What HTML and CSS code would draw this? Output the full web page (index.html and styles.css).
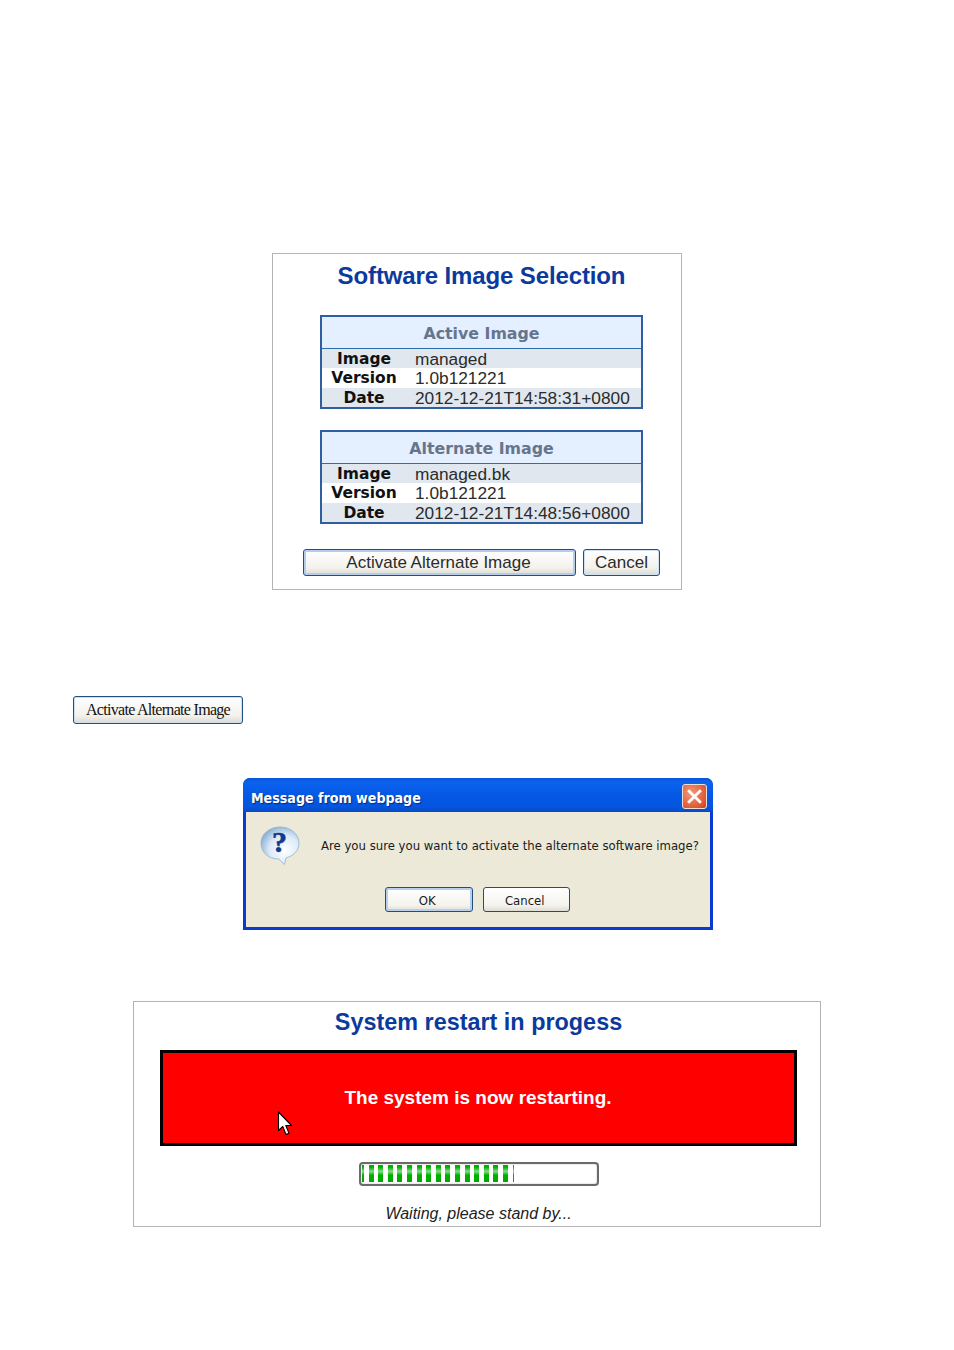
FILE: index.html
```html
<!DOCTYPE html>
<html lang="en">
<head>
<meta charset="utf-8">
<title>Software Image Selection</title>
<link rel="stylesheet" href="styles.css">
</head>
<body>
<main class="page">
  <section class="panel select-panel">
    <div class="select-inner">
      <h1 class="title">Software Image Selection</h1>
      <table class="info">
        <colgroup><col class="col-label"><col></colgroup>
        <thead><tr><th colspan="2">Active Image</th></tr></thead>
        <tbody>
          <tr class="shade"><th>Image</th><td>managed</td></tr>
          <tr><th>Version</th><td>1.0b121221</td></tr>
          <tr class="shade"><th>Date</th><td>2012-12-21T14:58:31+0800</td></tr>
        </tbody>
      </table>
      <table class="info">
        <colgroup><col class="col-label"><col></colgroup>
        <thead><tr><th colspan="2">Alternate Image</th></tr></thead>
        <tbody>
          <tr class="shade"><th>Image</th><td>managed.bk</td></tr>
          <tr><th>Version</th><td>1.0b121221</td></tr>
          <tr class="shade"><th>Date</th><td>2012-12-21T14:48:56+0800</td></tr>
        </tbody>
      </table>
    </div>
    <div class="actions">
      <button class="btn btn-activate" type="button">Activate Alternate Image</button>
      <button class="btn btn-cancel" type="button">Cancel</button>
    </div>
  </section>

  <button class="btn btn-serif" type="button">Activate Alternate Image</button>

  <section class="dialog">
    <header class="dialog-bar">
      <span class="dialog-title">Message from webpage</span>
      <span class="dialog-close">
        <svg viewBox="0 0 14 14" width="15" height="15"><path d="M2 2 L12 12 M12 2 L2 12" stroke="#fff" stroke-width="2.600" stroke-linecap="square"/></svg>
      </span>
    </header>
    <div class="dialog-body">
      <div class="dialog-message">
        <svg class="q-icon" viewBox="0 0 40 40" width="40" height="40">
          <defs>
            <radialGradient id="bub" cx="0.62" cy="0.62" r="0.72">
              <stop offset="0" stop-color="#ffffff"/>
              <stop offset="0.55" stop-color="#dceaf7"/>
              <stop offset="1" stop-color="#7fa8cf"/>
            </radialGradient>
          </defs>
          <path d="M20 1 C30.500 1 39 8 39 17 C39 25 33 30 26 32 L24.500 38.500 L18.500 33 C8 33 1 26 1 17 C1 8 9.500 1 20 1 Z" fill="url(#bub)" stroke="#8fb0cf" stroke-width="0.800"/>
          <text x="19.500" y="26" text-anchor="middle" class="q-mark">?</text>
        </svg>
        <p class="dialog-text">Are you sure you want to activate the alternate software image?</p>
      </div>
      <div class="dialog-actions">
        <button class="xp-btn xp-default" type="button">OK</button>
        <button class="xp-btn" type="button">Cancel</button>
      </div>
    </div>
  </section>

  <section class="panel restart-panel">
    <h2 class="title title-restart">System restart in progess</h2>
    <div class="alert">
      The system is now restarting.
      <svg class="cursor" viewBox="0 0 16 26" width="16" height="26"><path d="M1.500 1 L1.500 19.500 L5.800 15.500 L9 23.500 L12 22.300 L8.800 14.500 L14.500 14.500 Z" fill="#fff" stroke="#000" stroke-width="1.100" stroke-linejoin="round"/></svg>
    </div>
    <div class="progress">
      <i class="seg seg-start"></i>
      <i class="seg"></i><i class="seg"></i><i class="seg"></i><i class="seg"></i><i class="seg"></i>
      <i class="seg"></i><i class="seg"></i><i class="seg"></i><i class="seg"></i><i class="seg"></i>
      <i class="seg"></i><i class="seg"></i><i class="seg"></i><i class="seg"></i><i class="seg"></i>
      <i class="seg seg-end"></i>
    </div>
    <p class="waiting">Waiting, please stand by...</p>
  </section>
</main>
</body>
</html>
```

FILE: styles.css
```css
html, body { margin: 0; padding: 0; background: #fff; }
.page {
  width: 954px;
  height: 1350px;
  padding-top: 253px;
  box-sizing: border-box;
  display: flex;
  flex-direction: column;
  align-items: center;
  font-family: "Liberation Sans", Arial, sans-serif;
  overflow: hidden;
}
.panel { border: 1px solid #b4b4b4; box-sizing: border-box; background: #fff; }
.title {
  margin: 0;
  font-size: 24px;
  font-weight: bold;
  letter-spacing: -0.125px;
  color: #0b3a9c;
  text-align: center;
}

/* selection panel */
.select-panel { width: 410px; height: 337px; }
.select-inner { margin-left: 47px; width: 323px; display: flex; flex-direction: column; gap: 21px; }
.select-panel .title { height: 44px; line-height: 44px; margin-bottom: -4px; }
.info {
  width: 323px;
  height: 94px;
  box-sizing: border-box;
  border-collapse: separate;
  border-spacing: 0;
  border: 2px solid #2f5f9f;
  table-layout: fixed;
}
.col-label { width: 84px; }
.info thead th {
  height: 30px;
  padding: 1px 0 0;
  background: #e4efff;
  border-bottom: 1px solid #2f6fa8;
  font: bold 15.800px "DejaVu Sans", Verdana, sans-serif;
  color: #66758c;
}
.info tbody tr { height: 19.300px; }
.info tbody th {
  padding: 2px 0 0;
  font: bold 15.500px/17px "DejaVu Sans", Verdana, sans-serif;
  color: #111;
  text-align: center;
}
.info td {
  padding: 1px 0 0 9px;
  font-size: 17.300px;
  line-height: 18px;
  color: #2b2b2b;
  white-space: nowrap;
}
.info .shade { background: #e1e7ee; }
.actions { margin: 25px 0 0 30px; display: flex; gap: 7px; }
.btn {
  height: 27px;
  padding: 0;
  box-sizing: border-box;
  border: 1px solid #1f4f85;
  border-radius: 3px;
  background: linear-gradient(#ffffff, #f3f2ec 70%, #dcdad0);
  font-family: "Liberation Sans", Arial, sans-serif;
  font-size: 17px;
  color: #2b2b2b;
  box-shadow: inset 0 0 0 1px #cfdff2;
}
.btn-activate { width: 273px; padding-right: 2px; box-shadow: inset 0 0 0 2px #b5cdec; }
.btn-cancel { width: 77px; }

/* lone button */
.btn-serif {
  align-self: flex-start;
  margin: 106px 0 0 73px;
  width: 170px;
  height: 28px;
  font-family: "Liberation Serif", "Times New Roman", serif;
  font-size: 16px;
  letter-spacing: -0.700px;
  color: #111;
}

/* dialog */
.dialog {
  margin: 54px 0 0 2px;
  width: 470px;
  height: 152px;
  box-sizing: border-box;
  display: flex;
  flex-direction: column;
  background: #0a3bd0;
  border-radius: 7px 7px 0 0;
  padding: 0 3px 3px;
}
.dialog-bar {
  height: 34px;
  flex: none;
  margin: 0 -3px;
  padding: 0 6px 0 8px;
  box-sizing: border-box;
  display: flex;
  align-items: center;
  justify-content: space-between;
  border-radius: 7px 7px 0 0;
  background: linear-gradient(#0a55d8, #0a62ee 12%, #0558e4 50%, #0456e0 85%, #0a48c0);
}
.dialog-title {
  margin-top: 6px;
  font: bold 14.100px "DejaVu Sans", Tahoma, sans-serif;
  font-stretch: condensed;
  color: #fff;
  text-shadow: 1px 1px 1px #0a2a80;
}
.dialog-close {
  width: 25px;
  height: 25px;
  margin-top: 2px;
  box-sizing: border-box;
  display: flex;
  align-items: center;
  justify-content: center;
  border: 1px solid #f2ddd6;
  border-radius: 3px;
  background: radial-gradient(circle at 35% 35%, #ef9a7c, #df5a33 70%, #c8401c);
}
.dialog-body {
  flex: 1;
  background: #ece9d9;
  display: flex;
  flex-direction: column;
}
.dialog-message { display: flex; align-items: center; height: 72px; padding-left: 14px; }
.q-icon { flex: none; margin-top: -5px; overflow: visible; }
.q-mark { font: bold 30px "Liberation Serif", serif; fill: #123a8c; stroke: #123a8c; stroke-width: 0.600px; }
.dialog-text {
  margin: -6px 0 0 21px;
  font: 13px "DejaVu Sans", Tahoma, sans-serif;
  font-stretch: condensed;
  color: #1a1a1a;
  white-space: nowrap;
}
.dialog-actions { display: flex; gap: 10px; margin: 3px 0 0 139px; }
.xp-btn {
  width: 87.500px;
  height: 25px;
  padding: 1px 3px 0 0;
  box-sizing: border-box;
  border: 1px solid #1f4f7e;
  border-radius: 3px;
  background: linear-gradient(#fff, #f4f3ee 75%, #dedcd2);
  font: 13px "DejaVu Sans", Tahoma, sans-serif;
  font-stretch: condensed;
  color: #1a1a1a;
}
.xp-default { box-shadow: inset 0 0 0 2px #b9cfee; }

/* restart panel */
.restart-panel {
  margin-top: 71px;
  width: 688px;
  height: 226px;
  display: flex;
  flex-direction: column;
  align-items: center;
}
.title-restart { height: 40px; line-height: 40px; font-size: 23.400px; letter-spacing: 0; margin-left: 3px; }
.alert {
  position: relative;
  margin: 8px 0 0 2px;
  width: 637px;
  height: 96px;
  box-sizing: border-box;
  border: 3px solid #000;
  background: #f00;
  color: #fff;
  font-size: 19px;
  font-weight: bold;
  line-height: 90px;
  text-align: center;
}
.cursor { position: absolute; left: 114px; top: 58px; }
.progress {
  margin: 16px 0 0 4px;
  width: 240px;
  height: 24px;
  box-sizing: border-box;
  border: 2px solid #6b6b6b;
  border-radius: 4px;
  padding: 1px 0 2px 1px;
  display: flex;
  gap: 4.600px;
  background: #fff;
  box-shadow: inset 0 0 2px #bbb;
}
.seg {
  flex: none;
  width: 5px;
  background: linear-gradient(#00b000, #00b000 12%, #7fdc7f 38%, #00b000 60%, #00a800);
}
.seg-start { width: 2px; }
.seg-end { width: 1px; }
.waiting {
  margin: 18px 0 0 3px;
  font-size: 16px;
  font-style: italic;
  color: #222;
  line-height: 20px;
}
```
